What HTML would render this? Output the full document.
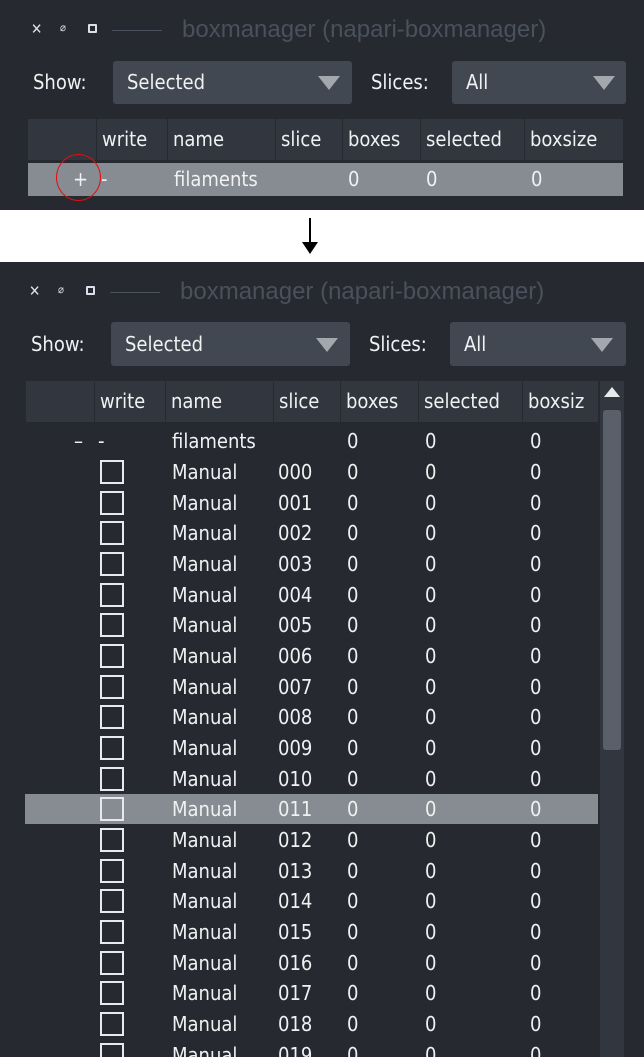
<!DOCTYPE html>
<html style="height:1057px;overflow:hidden"><head><meta charset="utf-8"><style>
*{margin:0;padding:0;box-sizing:border-box}
body{width:644px;height:1057px;background:#fff;position:relative;overflow:hidden;font-family:"DejaVu Sans Condensed","Liberation Sans",sans-serif;font-stretch:condensed;color:#f0f1f2}
.p{position:absolute;left:0;width:644px;background:#262930;overflow:hidden}
.a{position:absolute;white-space:nowrap}
.t{font-size:24px;color:#4a505c;font-family:"Liberation Sans",sans-serif}
.lbl{font-size:20px}
.cb{position:absolute;background:#414851;border-radius:3px}
.tri{position:absolute;width:0;height:0;border-left:11px solid transparent;border-right:11px solid transparent;border-top:14px solid #a3a8ae}
.hd{position:absolute;height:41px;background:#31363f}
.hc{position:absolute;top:0;height:41px;border-left:1px solid #262930;font-size:20px;line-height:41px;padding-left:5px}
.r{position:absolute;height:30px;font-size:20px;line-height:30px}
.r span{position:absolute;top:0}
.ck{position:absolute;width:24px;height:24px;border:2px solid #e8e9ea;top:3px}
.ico{position:absolute;font-size:13px;color:#dde}
</style></head><body>
<div class="p" style="top:0;height:210px">
 <div class="ico" style="left:31px;top:20px;font-size:15px">✕</div>
 <div class="ico" style="left:60px;top:21px;font-size:11px">⌀</div>
 <div class="a" style="left:88px;top:24px;width:9px;height:9px;border:2px solid #dde;border-radius:1px"></div>
 <div class="a" style="left:112px;top:30px;width:50px;height:1px;background:#4a505c"></div>
 <div class="a t" style="left:182px;top:16px">boxmanager (napari-boxmanager)</div>
 <div class="a lbl" style="left:33px;top:70px">Show:</div>
 <div class="cb" style="left:113px;top:61px;width:239px;height:43px"></div>
 <div class="a lbl" style="left:127px;top:70px">Selected</div>
 <div class="tri" style="left:318px;top:76px"></div>
 <div class="a lbl" style="left:371px;top:70px">Slices:</div>
 <div class="cb" style="left:452px;top:61px;width:174px;height:43px"></div>
 <div class="a lbl" style="left:466px;top:70px">All</div>
 <div class="tri" style="left:593px;top:76px"></div>
 <div class="hd" style="left:28px;top:119px;width:595px">
  <div class="hc" style="left:68px">write</div><div class="hc" style="left:139px">name</div><div class="hc" style="left:247px">slice</div><div class="hc" style="left:314px">boxes</div><div class="hc" style="left:392px">selected</div><div class="hc" style="left:496px">boxsize</div>
 </div>
 <div class="r" style="left:28px;top:163px;width:595px;height:33px;line-height:33px;background:#868c91">
  <span style="left:45px">+</span><span style="left:73px">-</span><span style="left:146px">filaments</span><span style="left:320px">0</span><span style="left:398px">0</span><span style="left:503px">0</span>
 </div>
 <div class="a" style="left:56px;top:154px;width:45px;height:47px;border:1px solid #e01010;border-radius:50%"></div>
</div>
<div class="a" style="left:309px;top:218px;width:2px;height:28px;background:#000"></div>
<div class="a" style="left:302px;top:242px;width:0;height:0;border-left:8px solid transparent;border-right:8px solid transparent;border-top:12px solid #000"></div>
<div class="p" style="top:262px;height:795px">
 <div class="ico" style="left:29px;top:20px;font-size:15px">✕</div>
 <div class="ico" style="left:58px;top:21px;font-size:11px">⌀</div>
 <div class="a" style="left:86px;top:24px;width:9px;height:9px;border:2px solid #dde;border-radius:1px"></div>
 <div class="a" style="left:110px;top:30px;width:50px;height:1px;background:#4a505c"></div>
 <div class="a t" style="left:180px;top:16px">boxmanager (napari-boxmanager)</div>
 <div class="a lbl" style="left:31px;top:70px">Show:</div>
 <div class="cb" style="left:111px;top:60px;width:239px;height:44px"></div>
 <div class="a lbl" style="left:125px;top:70px">Selected</div>
 <div class="tri" style="left:316px;top:76px"></div>
 <div class="a lbl" style="left:369px;top:70px">Slices:</div>
 <div class="cb" style="left:450px;top:60px;width:176px;height:44px"></div>
 <div class="a lbl" style="left:464px;top:70px">All</div>
 <div class="tri" style="left:591px;top:76px"></div>
 <div class="hd" style="left:26px;top:119px;width:572px">
  <div class="hc" style="left:68px">write</div><div class="hc" style="left:139px">name</div><div class="hc" style="left:247px">slice</div><div class="hc" style="left:314px">boxes</div><div class="hc" style="left:392px">selected</div><div class="hc" style="left:496px">boxsiz</div>
 </div>
 <div class="a" style="left:600px;top:119px;width:24px;height:676px;background:#31363f"></div>
 <div class="a" style="left:604px;top:125px;width:0;height:0;border-left:8px solid transparent;border-right:8px solid transparent;border-bottom:10px solid #e8e9ea"></div>
 <div class="a" style="left:603px;top:148px;width:18px;height:340px;background:#5a6069;border-radius:3px"></div>
 <div style="position:absolute;left:0;top:-262px;width:644px;height:1057px">
<div class="r" style="left:26px;top:426px;width:572px"><span style="left:48px">–</span><span style="left:72px">-</span><span style="left:146px">filaments</span><span style="left:321px">0</span><span style="left:399px">0</span><span style="left:504px">0</span></div>
<div class="r" style="left:26px;top:457px;width:572px"><div class="ck" style="left:74px"></div><span style="left:146px">Manual</span><span style="left:252px">000</span><span style="left:321px">0</span><span style="left:399px">0</span><span style="left:504px">0</span></div>
<div class="r" style="left:26px;top:488px;width:572px"><div class="ck" style="left:74px"></div><span style="left:146px">Manual</span><span style="left:252px">001</span><span style="left:321px">0</span><span style="left:399px">0</span><span style="left:504px">0</span></div>
<div class="r" style="left:26px;top:518px;width:572px"><div class="ck" style="left:74px"></div><span style="left:146px">Manual</span><span style="left:252px">002</span><span style="left:321px">0</span><span style="left:399px">0</span><span style="left:504px">0</span></div>
<div class="r" style="left:26px;top:549px;width:572px"><div class="ck" style="left:74px"></div><span style="left:146px">Manual</span><span style="left:252px">003</span><span style="left:321px">0</span><span style="left:399px">0</span><span style="left:504px">0</span></div>
<div class="r" style="left:26px;top:580px;width:572px"><div class="ck" style="left:74px"></div><span style="left:146px">Manual</span><span style="left:252px">004</span><span style="left:321px">0</span><span style="left:399px">0</span><span style="left:504px">0</span></div>
<div class="r" style="left:26px;top:610px;width:572px"><div class="ck" style="left:74px"></div><span style="left:146px">Manual</span><span style="left:252px">005</span><span style="left:321px">0</span><span style="left:399px">0</span><span style="left:504px">0</span></div>
<div class="r" style="left:26px;top:641px;width:572px"><div class="ck" style="left:74px"></div><span style="left:146px">Manual</span><span style="left:252px">006</span><span style="left:321px">0</span><span style="left:399px">0</span><span style="left:504px">0</span></div>
<div class="r" style="left:26px;top:672px;width:572px"><div class="ck" style="left:74px"></div><span style="left:146px">Manual</span><span style="left:252px">007</span><span style="left:321px">0</span><span style="left:399px">0</span><span style="left:504px">0</span></div>
<div class="r" style="left:26px;top:702px;width:572px"><div class="ck" style="left:74px"></div><span style="left:146px">Manual</span><span style="left:252px">008</span><span style="left:321px">0</span><span style="left:399px">0</span><span style="left:504px">0</span></div>
<div class="r" style="left:26px;top:733px;width:572px"><div class="ck" style="left:74px"></div><span style="left:146px">Manual</span><span style="left:252px">009</span><span style="left:321px">0</span><span style="left:399px">0</span><span style="left:504px">0</span></div>
<div class="r" style="left:26px;top:764px;width:572px"><div class="ck" style="left:74px"></div><span style="left:146px">Manual</span><span style="left:252px">010</span><span style="left:321px">0</span><span style="left:399px">0</span><span style="left:504px">0</span></div>
<div class="r" style="left:25px;top:794px;width:573px;background:#868c91"><div class="ck" style="left:75px"></div><span style="left:147px">Manual</span><span style="left:253px">011</span><span style="left:322px">0</span><span style="left:400px">0</span><span style="left:505px">0</span></div>
<div class="r" style="left:26px;top:825px;width:572px"><div class="ck" style="left:74px"></div><span style="left:146px">Manual</span><span style="left:252px">012</span><span style="left:321px">0</span><span style="left:399px">0</span><span style="left:504px">0</span></div>
<div class="r" style="left:26px;top:856px;width:572px"><div class="ck" style="left:74px"></div><span style="left:146px">Manual</span><span style="left:252px">013</span><span style="left:321px">0</span><span style="left:399px">0</span><span style="left:504px">0</span></div>
<div class="r" style="left:26px;top:886px;width:572px"><div class="ck" style="left:74px"></div><span style="left:146px">Manual</span><span style="left:252px">014</span><span style="left:321px">0</span><span style="left:399px">0</span><span style="left:504px">0</span></div>
<div class="r" style="left:26px;top:917px;width:572px"><div class="ck" style="left:74px"></div><span style="left:146px">Manual</span><span style="left:252px">015</span><span style="left:321px">0</span><span style="left:399px">0</span><span style="left:504px">0</span></div>
<div class="r" style="left:26px;top:948px;width:572px"><div class="ck" style="left:74px"></div><span style="left:146px">Manual</span><span style="left:252px">016</span><span style="left:321px">0</span><span style="left:399px">0</span><span style="left:504px">0</span></div>
<div class="r" style="left:26px;top:978px;width:572px"><div class="ck" style="left:74px"></div><span style="left:146px">Manual</span><span style="left:252px">017</span><span style="left:321px">0</span><span style="left:399px">0</span><span style="left:504px">0</span></div>
<div class="r" style="left:26px;top:1009px;width:572px"><div class="ck" style="left:74px"></div><span style="left:146px">Manual</span><span style="left:252px">018</span><span style="left:321px">0</span><span style="left:399px">0</span><span style="left:504px">0</span></div>
<div class="r" style="left:26px;top:1040px;width:572px"><div class="ck" style="left:74px"></div><span style="left:146px">Manual</span><span style="left:252px">019</span><span style="left:321px">0</span><span style="left:399px">0</span><span style="left:504px">0</span></div>
 </div>
</div>
</body></html>
